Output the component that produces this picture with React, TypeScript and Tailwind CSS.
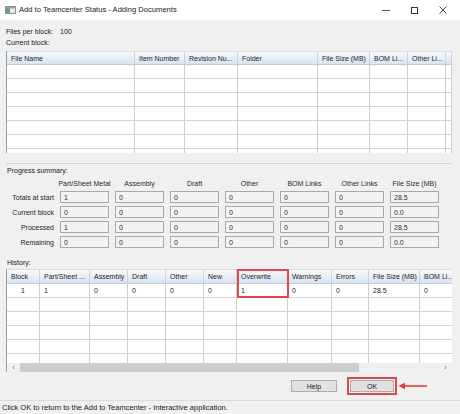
import React from "react";

const curCols = [
  { label: "File Name", w: "w-[128px]" },
  { label: "Item Number", w: "w-[50px]" },
  { label: "Revision Nu...", w: "w-[53px]" },
  { label: "Folder", w: "w-[80px]" },
  { label: "File Size (MB)", w: "w-[52px]" },
  { label: "BOM Li...", w: "w-[38px]" },
  { label: "Other Li...", w: "w-[38px]" },
  { label: "", w: "w-[6px]" },
];

const histCols = [
  { label: "Block", w: "w-[33px]", v: "1", c: true },
  { label: "Part/Sheet ...", w: "w-[50px]", v: "1" },
  { label: "Assembly", w: "w-[38px]", v: "0" },
  { label: "Draft", w: "w-[38px]", v: "0" },
  { label: "Other", w: "w-[38px]", v: "0" },
  { label: "New", w: "w-[33px]", v: "0" },
  { label: "Overwrite", w: "w-[51px]", v: "1" },
  { label: "Warnings", w: "w-[44px]", v: "0" },
  { label: "Errors", w: "w-[37px]", v: "0" },
  { label: "File Size (MB)", w: "w-[51px]", v: "28.5" },
  { label: "BOM Li...", w: "w-[40px]", v: "0" },
];

const progHeads = [
  "Part/Sheet Metal",
  "Assembly",
  "Draft",
  "Other",
  "BOM Links",
  "Other Links",
  "File Size (MB)",
];

const progRows: [string, string[]][] = [
  ["Totals at start", ["1", "0", "0", "0", "0", "0", "28.5"]],
  ["Current block", ["0", "0", "0", "0", "0", "0", "0.0"]],
  ["Processed", ["1", "0", "0", "0", "0", "0", "28.5"]],
  ["Remaining", ["0", "0", "0", "0", "0", "0", "0.0"]],
];

function TitleBar() {
  return (
    <div className="h-[20px] bg-white flex items-center shrink-0">
      <svg width="11" height="8" viewBox="0 0 11 8" className="ml-[5px]">
        <rect x="0.5" y="0.5" width="10" height="7" fill="#e8ecef" stroke="#8a9296" />
        <rect x="1" y="1" width="4" height="6" fill="#6f9a86" />
        <rect x="1" y="1" width="9" height="1.5" fill="#9aa4aa" />
      </svg>
      <span className="ml-[3px] text-[7.6px] text-[#1a1a1a] leading-none">
        Add to Teamcenter Status - Adding Documents
      </span>
      <div className="ml-auto flex items-center h-full">
        <div className="w-[8px] h-px bg-[#555] mr-[21px]" />
        <div className="w-[7px] h-[7px] border border-[#333] mr-[21px]" />
        <svg width="8" height="8" viewBox="0 0 8 8" className="mr-[13px]">
          <path d="M0.5 0.5 L7.5 7.5 M7.5 0.5 L0.5 7.5" stroke="#333" strokeWidth="0.9" />
        </svg>
      </div>
    </div>
  );
}

function HeaderCell({ label, w }: { label: string; w: string }) {
  return (
    <div
      className={`${w} h-full shrink-0 border-r border-[#c9d3dd] flex items-center pl-[4px] overflow-hidden whitespace-nowrap text-[#1e1e1e]`}
    >
      {label}
    </div>
  );
}

function CurrentTable() {
  const rows = [0, 1, 2, 3, 4, 5, 6];
  return (
    <div className="ml-[6px] w-[446px] h-[102px] border-l border-[#9c9c9c] bg-white overflow-hidden shrink-0">
      <div className="flex h-[14px] bg-gradient-to-b from-[#f8fafc] to-[#d7e4f1] border-b border-[#c3ccd6] border-t border-t-[#d8dde2]">
        {curCols.map((c, i) => (
          <HeaderCell key={i} label={c.label} w={c.w} />
        ))}
      </div>
      {rows.map((r) => (
        <div key={r} className="flex h-[14px] border-b border-[#d3d3d3]">
          {curCols.map((c, i) => (
            <div key={i} className={`${c.w} h-full shrink-0 border-r border-[#cfcfcf]`} />
          ))}
        </div>
      ))}
    </div>
  );
}

function Progress() {
  return (
    <div className="ml-[5px] grid grid-cols-[49px_49px_49px_49px_49px_49px_49px_49px] gap-x-[6px]">
      <div className="h-[12px]" />
      {progHeads.map((h) => (
        <div key={h} className="h-[12px] flex items-center justify-center whitespace-nowrap text-[#2a2a2a]">
          {h}
        </div>
      ))}
      {progRows.map(([label, vals], ri) => (
        <React.Fragment key={label}>
          <div
            className={`h-[12px] flex items-center justify-end whitespace-nowrap text-[#1e1e1e] ${ri === 0 ? "mt-[2px]" : "mt-[3px]"}`}
          >
            {label}
          </div>
          {vals.map((v, i) => (
            <div
              key={i}
              className={`h-[12px] border border-[#a9a9a9] bg-[#f3f3f3] flex items-center pl-[3px] text-[#2b2b2b] ${ri === 0 ? "mt-[2px]" : "mt-[3px]"}`}
            >
              {v}
            </div>
          ))}
        </React.Fragment>
      ))}
    </div>
  );
}

function HistoryTable() {
  const empty = [1, 2, 3, 4, 5];
  return (
    <div className="relative ml-[6px] w-[446px] h-[103px] border-l border-[#9c9c9c] overflow-hidden shrink-0 flex flex-col">
      <div className="flex-1 overflow-hidden bg-white">
        <div className="flex h-[15px] bg-gradient-to-b from-[#f8fafc] to-[#d7e4f1] border-b border-[#c3ccd6] border-t border-t-[#d8dde2]">
          {histCols.map((c, i) => (
            <HeaderCell key={i} label={c.label} w={c.w} />
          ))}
        </div>
        <div className="flex h-[14px] border-b border-[#d3d3d3]">
          {histCols.map((c, i) => (
            <div
              key={i}
              className={`${c.w} h-full shrink-0 border-r border-[#cfcfcf] flex items-center ${c.c ? "justify-center" : "pl-[4px]"} text-[#1e1e1e]`}
            >
              {c.v}
            </div>
          ))}
        </div>
        {empty.map((r) => (
          <div key={r} className="flex h-[14px] border-b border-[#d3d3d3]">
            {histCols.map((c, i) => (
              <div key={i} className={`${c.w} h-full shrink-0 border-r border-[#cfcfcf]`} />
            ))}
          </div>
        ))}
      </div>
      <div className="h-[9px] shrink-0 bg-[#f0f0f0] flex items-center">
        <div className="w-[13px] h-full flex items-center justify-center text-[7px] text-[#555]">‹</div>
        <div className="w-[339px] h-full bg-[#cdcdcd]" />
        <div className="flex-1" />
        <div className="w-[13px] h-full flex items-center justify-center text-[7px] text-[#555]">›</div>
      </div>
      <div className="absolute left-[230px] top-0 w-[52px] h-[29px] border-2 border-[#dd4a4e]" />
    </div>
  );
}

export default function App() {
  return (
    <div className="w-[460px] h-[414px] bg-[#f0f0f0] flex flex-col overflow-hidden font-['Liberation_Sans',Arial,sans-serif] text-[7px] leading-none text-[#1a1a1a]">
      <TitleBar />
      <div className="mt-[6px] h-[11px] flex items-center ml-[6px]">
        <span className="w-[54px]">Files per block:</span>
        <span>100</span>
      </div>
      <div className="h-[11px] flex items-center ml-[6px]">Current block:</div>
      <div className="h-[3px] shrink-0" />
      <CurrentTable />
      <div className="mt-[10px] ml-[6px] w-[445px] h-px bg-[#d2d2d2] shrink-0" />
      <div className="h-[13px] flex items-center ml-[7px] shrink-0">Progress summary:</div>
      <Progress />
      <div className="mt-[8px] h-[12px] flex items-center ml-[7px] shrink-0">History:</div>
      <div className="h-[1px] shrink-0" />
      <HistoryTable />
      <div className="mt-[5px] h-[18px] flex items-center justify-end pr-[32px] shrink-0">
        <div className="w-[46px] h-[12px] bg-[#e1e1e1] border border-[#adadad] flex items-center justify-center text-[#1e1e1e]">
          Help
        </div>
        <div className="ml-[10px] w-[50px] h-[18px] border-2 border-[#dd4a4e] flex items-center justify-center">
          <div className="w-[44px] h-[12px] bg-[#e1e1e1] border border-[#adadad] flex items-center justify-center text-[#1e1e1e]">
            OK
          </div>
        </div>
        <svg width="30" height="8" viewBox="0 0 30 8" className="ml-[1px]">
          <path d="M6 4 L29 4" stroke="#e23b40" strokeWidth="1.6" />
          <path d="M0.5 4 L7 0.8 L7 7.2 Z" fill="#e23b40" />
        </svg>
      </div>
      <div className="mt-[5px] h-px bg-[#dadada] shrink-0" />
      <div className="flex-1 flex items-center pl-[2px] text-[7.5px] text-[#1a1a1a] whitespace-nowrap">
        Click OK to return to the Add to Teamcenter - Interactive application.
      </div>
    </div>
  );
}
